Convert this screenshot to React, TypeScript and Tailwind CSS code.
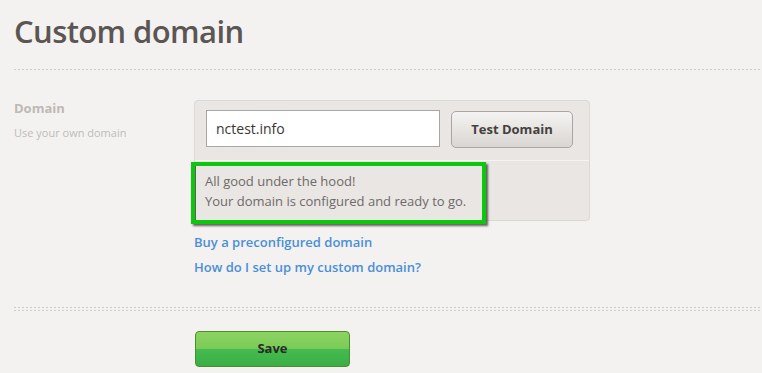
import React from "react";

const dots =
  "h-px bg-[linear-gradient(to_right,#cfccc9_50%,transparent_50%)] bg-[length:4px_1px] bg-repeat-x";

export default function App() {
  return (
    <div
      className="min-h-[373px] w-full bg-[#f3f2f0] pl-[14px] pt-[10px]"
      style={{ fontFamily: '"Open Sans", "Noto Sans", sans-serif' }}
    >
      <h1 className="text-[31px] leading-[42px] font-semibold text-[#5b5654] tracking-[-0.6px]">
        Custom domain
      </h1>
      <div className={`${dots} mt-[17px]`} />

      <div className="mt-[30px] flex">
        <div className="w-[180px] shrink-0 -mt-px">
          <div className="text-[13px] leading-[18px] font-bold text-[#bdb9b6]">Domain</div>
          <div className="mt-[8px] text-[11px] leading-[16px] text-[#bfbbb8]">Use your own domain</div>
        </div>

        <div className="flex flex-col">
          <div className="w-[396px] rounded-[4px] border border-[#dcd8d4] bg-[#e9e6e3]">
            <div className="flex items-start pl-[11px] pr-[15px] pt-[9px] pb-[12px]">
              <div className="flex h-[37px] w-[234px] items-center border border-[#a9a6a4] bg-white pl-[9px] text-[14px] text-[#3a3634]">
                nctest.info
              </div>
              <button className="ml-[11px] mt-px flex h-[37px] w-[122px] items-center justify-center rounded-[5px] border border-[#a8a5a2] bg-[linear-gradient(to_bottom,#f5f3f1,#d9d6d3)] text-[13px] font-bold text-[#444140]">
                Test Domain
              </button>
            </div>
            <div className="h-px bg-[#f6f4f2]" />
            <div className="pt-[1px] -mb-[4px]">
              <div className="-ml-[4px] w-[295px] border-[4px] border-[#0fc60f] bg-[#e9e6e3] pl-[10px] pt-[5px] pb-[9px] text-[13px] leading-[20px] text-[#6d6a68] shadow-[inset_1px_0_0_#5e5e5e,2px_2px_2px_rgba(0,0,0,0.6)]">
                <div>All good under the hood!</div>
                <div>Your domain is configured and ready to go.</div>
              </div>
            </div>
          </div>

          <div className="mt-[11px] flex flex-col gap-[5px] text-[13px] leading-[20px] font-semibold text-[#4a8fd9]">
            <a href="#" className="w-fit">Buy a preconfigured domain</a>
            <a href="#" className="w-fit">How do I set up my custom domain?</a>
          </div>
        </div>
      </div>

      <div className="mt-[30px] flex flex-col gap-[2px]">
        <div className={dots} />
        <div className={dots} />
      </div>

      <div className="mt-[20px] pl-[181px]">
        <button className="flex h-[36px] w-[155px] items-center justify-center rounded-[4px] border border-[#4b8f2b] bg-[linear-gradient(to_bottom,#8cd462_0%,#7bca57_50%,#45bc4f_50%,#3aae45_100%)] text-[13px] font-bold text-[#2a2a28]">
          Save
        </button>
      </div>
    </div>
  );
}
